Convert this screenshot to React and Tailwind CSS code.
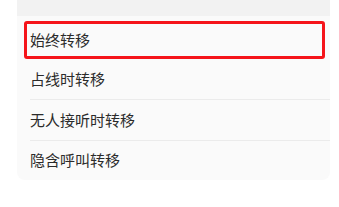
const rows = ['占线时转移', '无人接听时转移', '隐含呼叫转移'];

export default function App() {
  return (
    <div className="w-[339px] h-[207px] bg-white" style={{ fontFamily: '"Noto Sans CJK SC", "Noto Sans", sans-serif' }}>
      <div className="ml-[17px] w-[313px]">
        <div className="h-[16px] bg-[#f2f2f2]" />
        <div className="bg-[#fafafa] rounded-b-[8px]">
          <div className="pt-[5px] pl-[7px] pr-[5px]">
            <div className="h-[38px] border-[3px] border-[#f5141a] rounded-[3px] flex items-center pl-[3px] text-[15px] text-[#2b2b2b]">
              始终转移
            </div>
          </div>
          {rows.map((r, i) => (
            <div key={r} className="pl-[13px]">
              <div className={`flex items-center text-[15px] text-[#2b2b2b] ${i < rows.length - 1 ? 'h-[41px] border-b border-[#ebebeb]' : 'h-[39px]'}`}>
                {r}
              </div>
            </div>
          ))}
        </div>
      </div>
    </div>
  );
}
